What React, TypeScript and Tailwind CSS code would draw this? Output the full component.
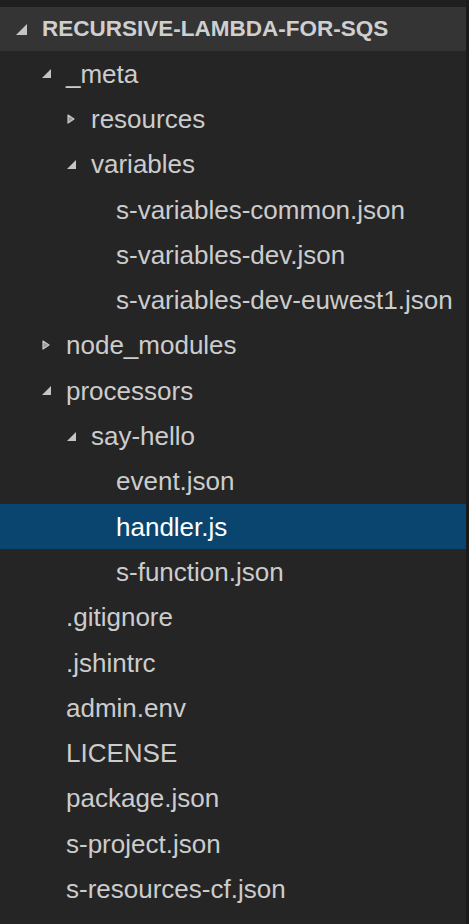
import React from 'react';

type Node = {
  name: string;
  depth: number;
  kind: 'open' | 'closed' | 'file';
  selected?: boolean;
};

const tree: Node[] = [
  { name: '_meta', depth: 1, kind: 'open' },
  { name: 'resources', depth: 2, kind: 'closed' },
  { name: 'variables', depth: 2, kind: 'open' },
  { name: 's-variables-common.json', depth: 3, kind: 'file' },
  { name: 's-variables-dev.json', depth: 3, kind: 'file' },
  { name: 's-variables-dev-euwest1.json', depth: 3, kind: 'file' },
  { name: 'node_modules', depth: 1, kind: 'closed' },
  { name: 'processors', depth: 1, kind: 'open' },
  { name: 'say-hello', depth: 2, kind: 'open' },
  { name: 'event.json', depth: 3, kind: 'file' },
  { name: 'handler.js', depth: 3, kind: 'file', selected: true },
  { name: 's-function.json', depth: 3, kind: 'file' },
  { name: '.gitignore', depth: 1, kind: 'file' },
  { name: '.jshintrc', depth: 1, kind: 'file' },
  { name: 'admin.env', depth: 1, kind: 'file' },
  { name: 'LICENSE', depth: 1, kind: 'file' },
  { name: 'package.json', depth: 1, kind: 'file' },
  { name: 's-project.json', depth: 1, kind: 'file' },
  { name: 's-resources-cf.json', depth: 1, kind: 'file' },
];

const indent = ['pl-[17px]', 'pl-[42px]', 'pl-[67px]', 'pl-[92px]'];

// expanded folder marker
const OpenArrow = ({ size = 9 }: { size?: number }) => (
  <svg width={size} height={size} viewBox="0 0 10 10" className="block">
    <polygon points="10,0 10,10 0,10" fill="#c5c5c5" />
  </svg>
);

// collapsed folder marker
const ClosedArrow = () => (
  <svg width="8" height="10" viewBox="0 0 8 10" className="block">
    <polygon points="1,1 7,5 1,9" fill="#9a9a9a" stroke="#c8c8c8" strokeWidth="1.2" strokeLinejoin="round" />
  </svg>
);

const Row = ({ node }: { node: Node }) => (
  <div
    className={`h-[45.3px] flex items-center ${indent[node.depth]} ${
      node.selected ? 'bg-[#0a4570] text-white' : 'text-[#cccccc]'
    }`}
  >
    <span className="w-[24px] flex items-center">
      {node.kind === 'open' && <OpenArrow />}
      {node.kind === 'closed' && <ClosedArrow />}
    </span>
    <span className="text-[26px] leading-none whitespace-nowrap">{node.name}</span>
  </div>
);

export default function App() {
  return (
    <div
      className="w-[469px] h-[924px] bg-[#252526] flex overflow-hidden"
      style={{ fontFamily: '"Liberation Sans", Arial, sans-serif' }}
    >
      <div className="flex-1 flex flex-col">
        <div className="h-[7px] bg-[#1f1f1f]" />
        <div className="h-[44px] bg-[#343434] flex items-center pl-[16px]">
          <span className="w-[26px] flex items-center">
            <OpenArrow size={11} />
          </span>
          <span className="text-[22.5px] font-bold text-[#cfcfcf] leading-none">RECURSIVE-LAMBDA-FOR-SQS</span>
        </div>
        {tree.map((n) => (
          <Row key={n.name} node={n} />
        ))}
      </div>
      <div className="w-[3px] bg-[#1a1a1a]" />
    </div>
  );
}
